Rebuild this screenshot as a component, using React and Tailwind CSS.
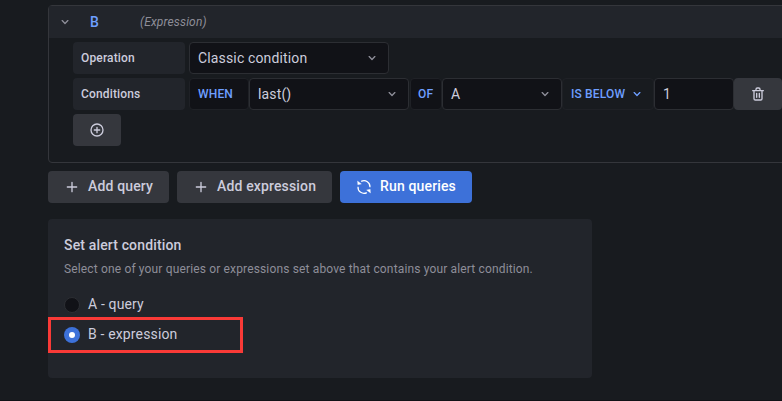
const Chevron = ({ className = '' }) => (
  <svg viewBox="0 0 24 24" fill="currentColor" className={`h-4 w-4 shrink-0 ${className}`}>
    <path d="M17 9.17a1 1 0 0 0-1.41 0L12 12.71 8.46 9.17a1 1 0 0 0-1.41 0 1 1 0 0 0 0 1.42l4.24 4.24a1 1 0 0 0 1.42 0L17 10.59a1 1 0 0 0 0-1.42Z" />
  </svg>
);

const Plus = () => (
  <svg viewBox="0 0 24 24" fill="currentColor" className="h-4 w-4 shrink-0">
    <path d="M19 11h-6V5a1 1 0 0 0-2 0v6H5a1 1 0 0 0 0 2h6v6a1 1 0 0 0 2 0v-6h6a1 1 0 0 0 0-2Z" />
  </svg>
);

const PlusCircle = () => (
  <svg viewBox="0 0 24 24" fill="currentColor" className="h-4 w-4">
    <path d="M12 2a10 10 0 1 0 10 10A10 10 0 0 0 12 2Zm0 18a8 8 0 1 1 8-8 8 8 0 0 1-8 8Zm4-9h-3V8a1 1 0 0 0-2 0v3H8a1 1 0 0 0 0 2h3v3a1 1 0 0 0 2 0v-3h3a1 1 0 0 0 0-2Z" />
  </svg>
);

const Trash = () => (
  <svg viewBox="0 0 24 24" fill="currentColor" className="h-4 w-4">
    <path d="M10 18a1 1 0 0 0 1-1v-6a1 1 0 0 0-2 0v6a1 1 0 0 0 1 1ZM20 6h-4V5a3 3 0 0 0-3-3h-2a3 3 0 0 0-3 3v1H4a1 1 0 0 0 0 2h1v11a3 3 0 0 0 3 3h8a3 3 0 0 0 3-3V8h1a1 1 0 0 0 0-2ZM10 5a1 1 0 0 1 1-1h2a1 1 0 0 1 1 1v1h-4Zm7 14a1 1 0 0 1-1 1H8a1 1 0 0 1-1-1V8h10Zm-3-1a1 1 0 0 0 1-1v-6a1 1 0 0 0-2 0v6a1 1 0 0 0 1 1Z" />
  </svg>
);

const Sync = () => (
  <svg viewBox="0 0 16 16" fill="none" stroke="currentColor" strokeWidth="1.2" className="h-4 w-4 shrink-0">
    <path d="M5.2 2.4A6 6 0 0 1 14 8.2M10.8 13.6A6 6 0 0 1 2 7.8" />
    <path d="M1.5 2 1.8 5.8 5.4 4.9Z M14.5 14 14.2 10.2 10.6 11.1Z" fill="currentColor" strokeWidth="0.3" />
  </svg>
);

const Label = ({ children }) => (
  <div className="mr-1 flex h-8 w-28 shrink-0 items-center rounded-sm bg-[#22252b] px-2 text-xs font-medium">{children}</div>
);

const Select = ({ children, className }) => (
  <div className={`flex h-8 shrink-0 items-center justify-between rounded-sm border border-[#2c2e33] bg-[#111217] pr-2 pl-2 ${className}`}>
    <span>{children}</span>
    <Chevron className="text-[#8e8e99]" />
  </div>
);

const Keyword = ({ children, className }) => (
  <div className={`flex h-8 shrink-0 items-center rounded-sm border border-[#1f2126] text-xs font-medium text-[#6e9fff] ${className}`}>{children}</div>
);

const Button = ({ icon, children, className }) => (
  <button className={`flex h-8 shrink-0 items-center gap-2 rounded-sm pl-4 font-medium whitespace-nowrap ${className}`}>
    {icon}
    <span className="relative -top-px">{children}</span>
  </button>
);

export default function App() {
  return (
    <div className="h-[401px] w-[782px] overflow-hidden border-b border-[#111217] bg-[#181b1f] pt-[5px] pl-12 font-[Roboto,sans-serif] text-sm tracking-[0.01071em] text-[#ccccdc]">
      <section className="h-[158px] w-[760px] rounded-sm border border-[#34363b]">
        <header className="flex h-8 items-center bg-[#22252b] pl-2">
          <Chevron className="text-[#8e8e99]" />
          <span className="ml-[17px] w-[50px] font-medium text-[#6e9fff]">B</span>
          <span className="text-xs text-[#8e8e99] italic">(Expression)</span>
        </header>
        <div className="flex flex-col gap-1 pt-1 pl-6">
          <div className="flex">
            <Label>Operation</Label>
            <Select className="w-[200px]">Classic condition</Select>
          </div>
          <div className="flex">
            <Label>Conditions</Label>
            <Keyword className="w-[60px] bg-[#111217] pl-2">WHEN</Keyword>
            <Select className="w-[160px]">last()</Select>
            <Keyword className="ml-px w-8 bg-[#111217] pl-[7px]">OF</Keyword>
            <Select className="w-[120px]">A</Select>
            <Keyword className="w-[92px] gap-1 bg-[#181b1f] pl-2">
              IS BELOW
              <Chevron />
            </Keyword>
            <div className="flex h-8 w-20 shrink-0 items-center rounded-sm border border-[#2c2e33] bg-[#111217] pl-2">1</div>
            <button className="flex h-8 w-12 shrink-0 items-center justify-center rounded-sm bg-[#35373d]">
              <Trash />
            </button>
          </div>
          <button className="flex h-8 w-12 items-center justify-center rounded-sm bg-[#35373d]">
            <PlusCircle />
          </button>
        </div>
      </section>

      <div className="mt-2 flex gap-2">
        <Button icon={<Plus />} className="w-[121px] bg-[#35373d]">Add query</Button>
        <Button icon={<Plus />} className="w-[155px] bg-[#35373d]">Add expression</Button>
        <Button icon={<Sync />} className="w-[132px] bg-[#3d71d9] text-white">Run queries</Button>
      </div>

      <section className="mt-4 h-[159px] w-[544px] rounded-sm bg-[#22252b] pt-4">
        <h2 className="pl-4 leading-5 font-medium">Set alert condition</h2>
        <p className="mt-[5px] pl-4 text-xs leading-[18px] text-[#8e8e99]">Select one of your queries or expressions set above that contains your alert condition.</p>
        <div className="mt-[15px] mb-px flex h-[23px] items-center gap-2 pl-4">
          <span className="h-4 w-4 rounded-full border border-[#2c2e33] bg-[#111217]" />
          <span className="relative -top-px">A - query</span>
        </div>
        <div className="flex h-9 w-[195px] items-center gap-2 border-3 border-[#f93a37] pl-[13px]">
          <span className="flex h-4 w-4 items-center justify-center rounded-full bg-[#3d71d9]">
            <span className="h-1.5 w-1.5 rounded-full bg-white" />
          </span>
          <span className="relative -top-px">B - expression</span>
        </div>
      </section>
    </div>
  );
}
